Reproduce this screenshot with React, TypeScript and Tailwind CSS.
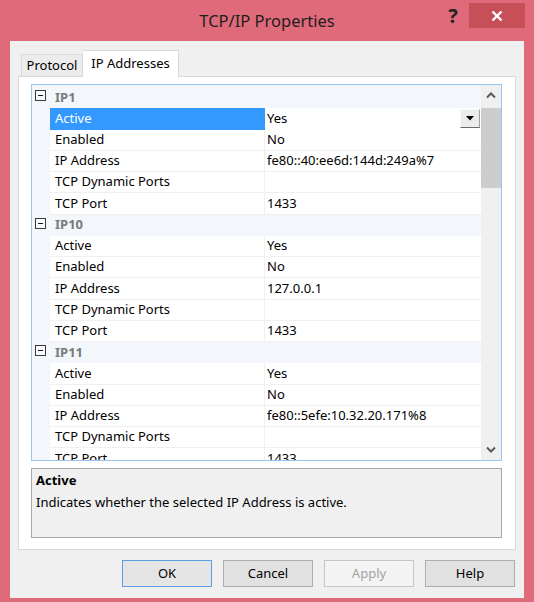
import React from "react";

type Prop = [string, string];
type Group = { name: string; props: Prop[] };

const groups: Group[] = [
  {
    name: "IP1",
    props: [
      ["Active", "Yes"],
      ["Enabled", "No"],
      ["IP Address", "fe80::40:ee6d:144d:249a%7"],
      ["TCP Dynamic Ports", ""],
      ["TCP Port", "1433"],
    ],
  },
  {
    name: "IP10",
    props: [
      ["Active", "Yes"],
      ["Enabled", "No"],
      ["IP Address", "127.0.0.1"],
      ["TCP Dynamic Ports", ""],
      ["TCP Port", "1433"],
    ],
  },
  {
    name: "IP11",
    props: [
      ["Active", "Yes"],
      ["Enabled", "No"],
      ["IP Address", "fe80::5efe:10.32.20.171%8"],
      ["TCP Dynamic Ports", ""],
      ["TCP Port", "1433"],
    ],
  },
  {
    name: "IP12",
    props: [
      ["Active", "Yes"],
      ["Enabled", "No"],
    ],
  },
];

function MinusBox() {
  return (
    <div className="mt-[3px] ml-[3px] flex h-[11px] w-[11px] items-center justify-center border border-[#3a3a3a] bg-[#fafafa]">
      <div className="h-[1px] w-[5px] bg-[#1a1a1a]" />
    </div>
  );
}

function Chevron({ down }: { down?: boolean }) {
  return (
    <svg width="10" height="7" viewBox="0 0 10 7">
      <path
        d={down ? "M1 1.5 L5 5.5 L9 1.5" : "M1 5.5 L5 1.5 L9 5.5"}
        fill="none"
        stroke="#5a5a5a"
        strokeWidth="2"
      />
    </svg>
  );
}

function Btn({
  label,
  variant,
}: {
  label: string;
  variant?: "default" | "disabled";
}) {
  const cls =
    variant === "default"
      ? "border-[#5b9fe3] bg-[#e5e5e5] text-black"
      : variant === "disabled"
      ? "border-[#c6c6c6] bg-[#f4f4f4] text-[#a3a3a3]"
      : "border-[#adadad] bg-[#e1e1e1] text-black";
  return (
    <div
      className={`flex h-[27px] w-[90px] items-center justify-center border text-[13px] ${cls}`}
    >
      {label}
    </div>
  );
}

export default function App() {
  return (
    <div className="flex h-[602px] w-[534px] flex-col bg-[#df6a7a] font-['Noto_Sans',sans-serif] text-[13px] text-black">
      {/* Title bar */}
      <div className="grid h-[41px] grid-cols-[1fr_auto_1fr]">
        <div />
        <div className="self-center pt-[2px] text-[16.5px] text-[#1e1e1e]">
          TCP/IP Properties
        </div>
        <div className="flex justify-self-end self-start mt-[3px] mr-[9px]">
          <div className="flex h-[25px] w-[26px] items-center justify-center text-[20px] font-bold leading-none text-[#222]">
            ?
          </div>
          <div className="ml-[3px] flex h-[25px] w-[56px] items-center justify-center bg-[#c75058]">
            <svg width="12" height="12" viewBox="0 0 12 12">
              <path
                d="M1.5 1.5 L10.5 10.5 M10.5 1.5 L1.5 10.5"
                stroke="white"
                strokeWidth="2.4"
              />
            </svg>
          </div>
        </div>
      </div>

      {/* Client area */}
      <div className="mx-[10px] mb-[4px] flex flex-1 flex-col bg-[#f0f0f0]">
        <div className="px-[8px] pt-[9px]">
          {/* Tabs */}
          <div className="relative z-10 flex h-[26px] items-end pl-[3px]">
            <div className="flex h-[22px] w-[62px] items-center justify-center border border-b-0 border-[#d9d9d9] bg-[#ececec] pt-[1px]">
              Protocol
            </div>
            <div className="-mb-[1px] flex h-[27px] w-[96px] items-center justify-center border border-b-0 border-l-0 border-[#d9d9d9] bg-white pb-[1px]">
              IP Addresses
            </div>
          </div>

          {/* Panel */}
          <div className="flex h-[474px] flex-col border border-[#d9d9d9] bg-white pt-[7px] pl-[12px] pr-[13px]">
            {/* Property grid */}
            <div className="flex h-[377px] border border-[#99c6ef]">
              <div className="flex-1 overflow-hidden bg-[#f3f6fb] pt-[2px]">
                {groups.map((g, gi) => (
                  <div key={g.name}>
                    <div className="flex h-[21.25px] bg-[#f3f6fb]">
                      <div className="w-[18px]">
                        <MinusBox />
                      </div>
                      <div className="flex items-center pl-[5px] font-bold text-[#7a7a7a]">
                        {g.name}
                      </div>
                    </div>
                    {g.props.map(([n, v], pi) => {
                      const sel = gi === 0 && pi === 0;
                      return (
                        <div key={n} className="flex h-[21.25px]">
                          <div className="w-[18px] bg-[#f3f6fb]" />
                          <div
                            className={`flex w-[215px] items-center border-r pl-[5px] ${
                              sel
                                ? "border-r-[#3399ff] bg-[#3399ff] text-white"
                                : "border-b border-[#f0f0f0] bg-white"
                            }`}
                          >
                            {n}
                          </div>
                          <div
                            className={`flex flex-1 items-center pl-[2px] ${
                              sel ? "bg-white" : "border-b border-[#f0f0f0] bg-white"
                            }`}
                          >
                            <span className="flex-1">{v}</span>
                            {sel && (
                              <div className="mr-[1px] flex h-[19px] w-[20px] items-center justify-center border border-t-[#f8f8f8] border-l-[#f8f8f8] border-r-[#a0a0a0] border-b-[#6a6a6a] bg-[#ececec]">
                                <svg width="8" height="5" viewBox="0 0 8 5">
                                  <path d="M0 0 L8 0 L4 4.5 Z" fill="#000" />
                                </svg>
                              </div>
                            )}
                          </div>
                        </div>
                      );
                    })}
                  </div>
                ))}
              </div>
              {/* Scrollbar */}
              <div className="flex w-[20px] flex-col bg-[#f0f0f0]">
                <div className="flex h-[21px] items-center justify-center">
                  <Chevron />
                </div>
                <div className="mt-[2px] h-[80px] bg-[#cdcdcd]" />
                <div className="flex-1" />
                <div className="flex h-[21px] items-center justify-center">
                  <Chevron down />
                </div>
              </div>
            </div>

            {/* Description */}
            <div className="mt-[7px] h-[70px] border border-[#a8a8a8] bg-[#f0f0f0] px-[4px] pt-[1px]">
              <div className="font-bold leading-[20px]">Active</div>
              <div className="mt-[2px] leading-[20px]">
                Indicates whether the selected IP Address is active.
              </div>
            </div>
          </div>
        </div>

        {/* Buttons */}
        <div className="flex justify-end gap-[11px] pt-[10px] pr-[9px]">
          <Btn label="OK" variant="default" />
          <Btn label="Cancel" />
          <Btn label="Apply" variant="disabled" />
          <Btn label="Help" />
        </div>
      </div>
    </div>
  );
}
